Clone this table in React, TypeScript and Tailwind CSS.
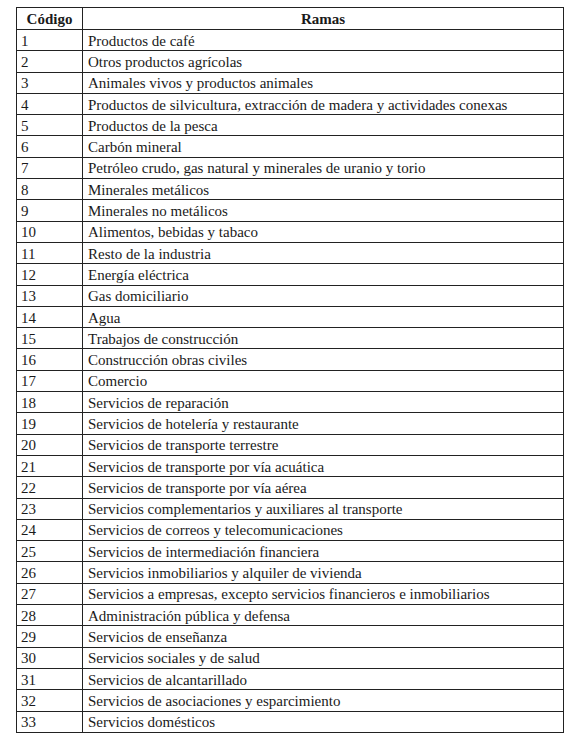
const ramas = [
  "Productos de café",
  "Otros productos agrícolas",
  "Animales vivos y productos animales",
  "Productos de silvicultura, extracción de madera y actividades conexas",
  "Productos de la pesca",
  "Carbón mineral",
  "Petróleo crudo, gas natural y minerales de uranio y torio",
  "Minerales metálicos",
  "Minerales no metálicos",
  "Alimentos, bebidas y tabaco",
  "Resto de la industria",
  "Energía eléctrica",
  "Gas domiciliario",
  "Agua",
  "Trabajos de construcción",
  "Construcción obras civiles",
  "Comercio",
  "Servicios de reparación",
  "Servicios de hotelería y restaurante",
  "Servicios de transporte terrestre",
  "Servicios de transporte por vía acuática",
  "Servicios de transporte por vía aérea",
  "Servicios complementarios y auxiliares al transporte",
  "Servicios de correos y telecomunicaciones",
  "Servicios de intermediación financiera",
  "Servicios inmobiliarios y alquiler de vivienda",
  "Servicios a empresas, excepto servicios financieros e inmobiliarios",
  "Administración pública y defensa",
  "Servicios de enseñanza",
  "Servicios sociales y de salud",
  "Servicios de alcantarillado",
  "Servicios de asociaciones y esparcimiento",
  "Servicios domésticos",
];

const App = () => {
  return (
    <div
      className="min-h-[739px] bg-white pt-[7px] pl-[16px] text-[15px] text-[#1a1a1a]"
      style={{ fontFamily: '"Liberation Serif", "Times New Roman", serif' }}
    >
      <table className="w-[548px] border-collapse">
        <thead>
          <tr className="h-[22px]">
            <th className="w-[66px] border border-[#222] p-0 pt-[1px] text-center font-bold leading-none">Código</th>
            <th className="border border-[#222] p-0 pt-[1px] text-center font-bold leading-none">Ramas</th>
          </tr>
        </thead>
        <tbody>
          {ramas.map((r, i) => (
            <tr key={i} className="h-[21.3px]">
              <td className="border border-[#222] py-0 pl-[4px] pt-[2px] leading-none">{i + 1}</td>
              <td className="border border-[#222] py-0 pl-[5px] pt-[2px] leading-none">{r}</td>
            </tr>
          ))}
        </tbody>
      </table>
    </div>
  );
};

export default App;
